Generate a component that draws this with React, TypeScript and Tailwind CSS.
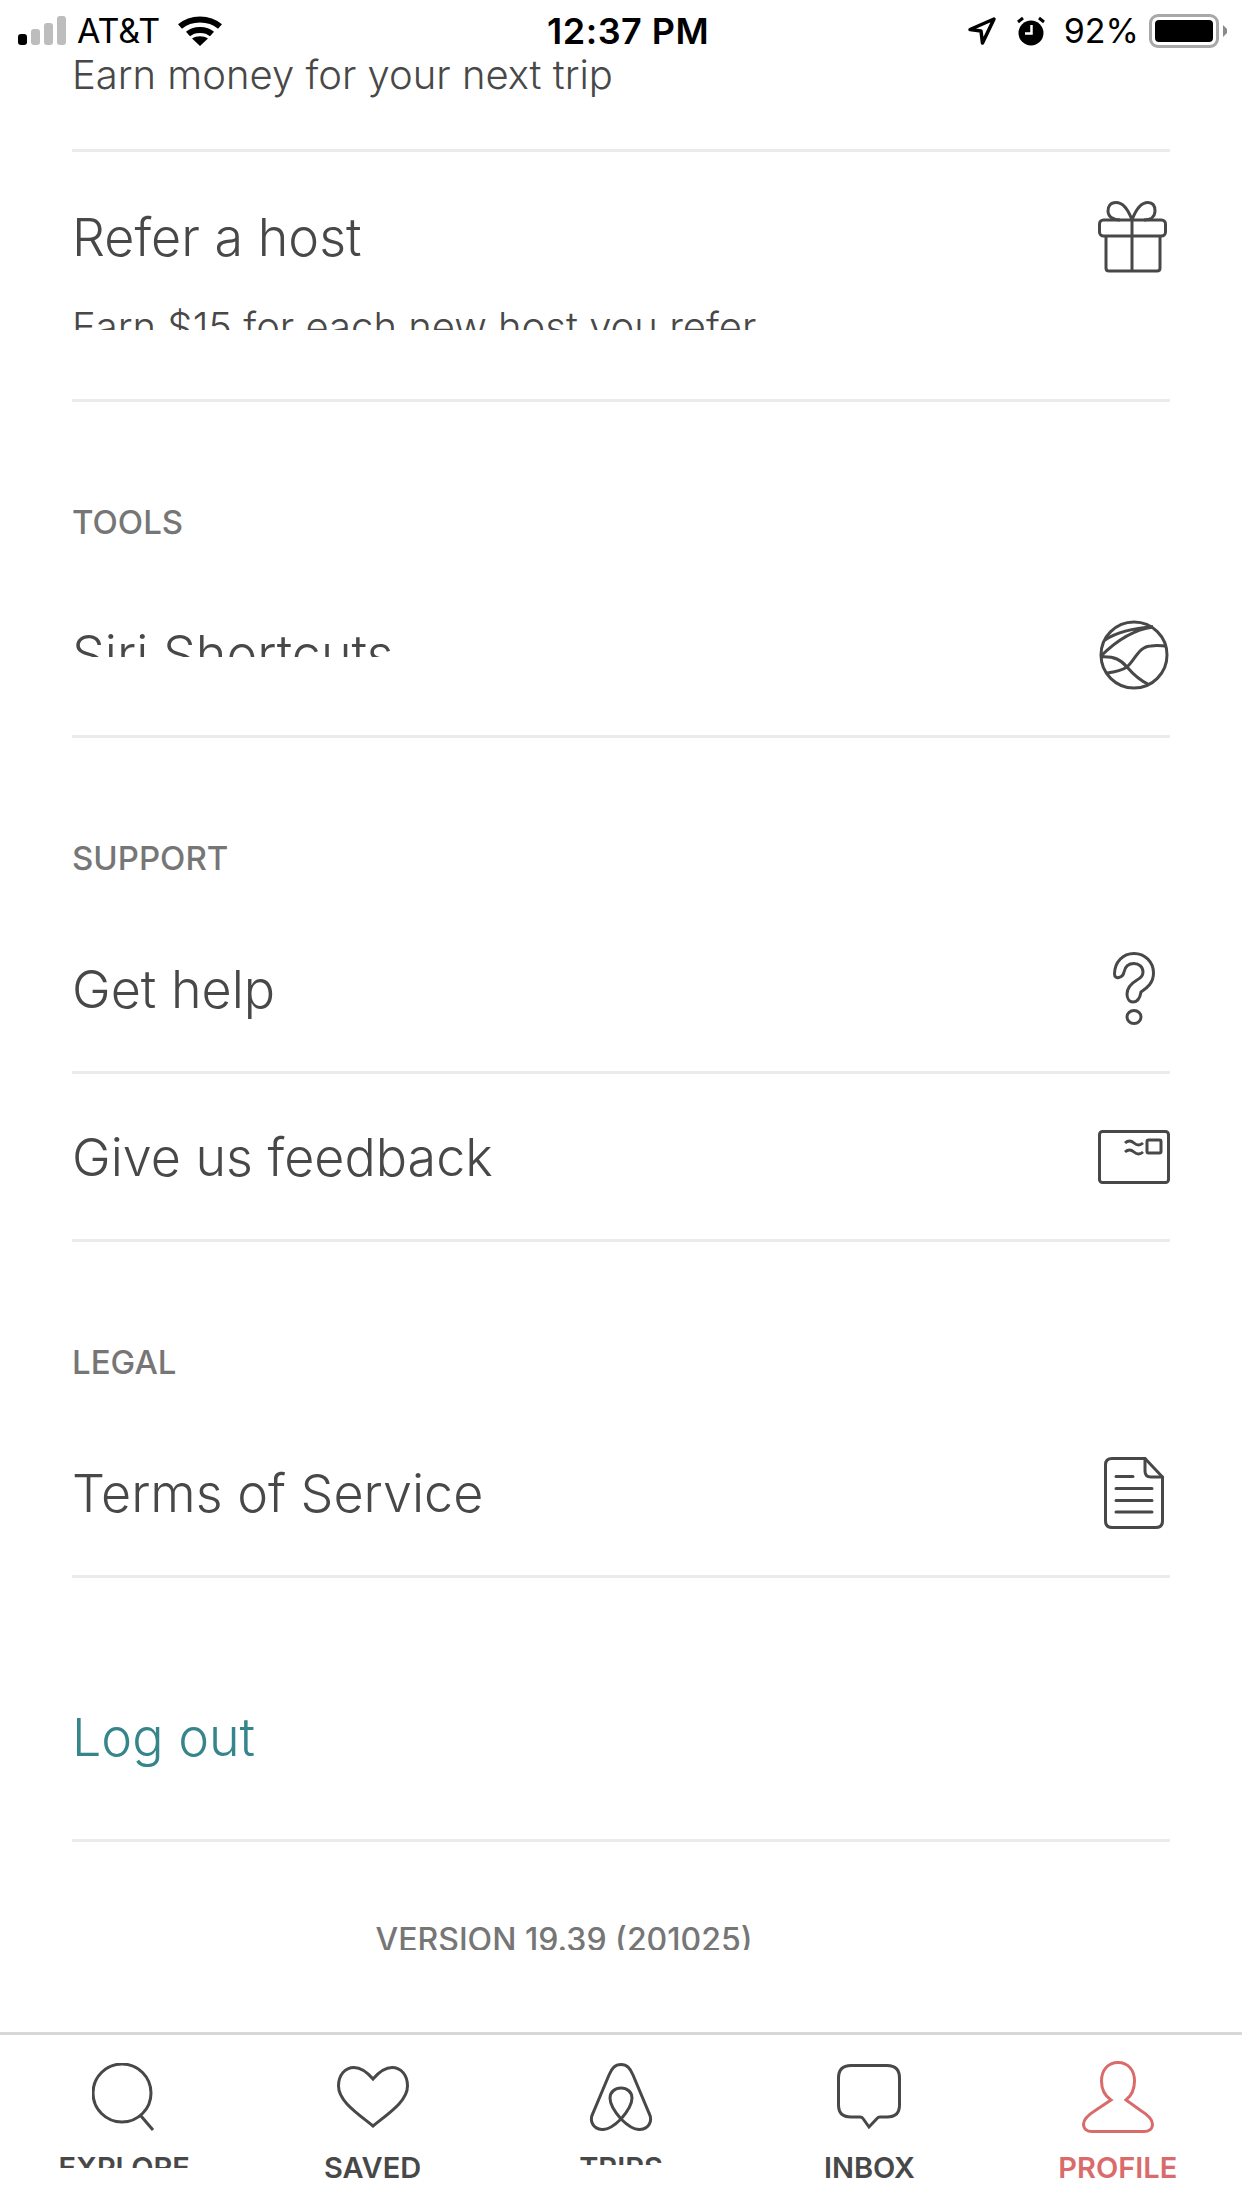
import React from "react";

const sans = "font-['Inter','Liberation_Sans',sans-serif]";

const SectionHeader = ({ label }: { label: string }) => (
  <div className="h-[168px] pl-[72px] pt-[86px] text-[33px] leading-[68px] font-medium text-[#767676]">{label}</div>
);

const Row = ({ title, icon, teal, tall }: { title: string; icon?: React.ReactNode; teal?: boolean; tall?: boolean }) => (
  <div className={`mx-[72px] ${tall ? "h-[208px]" : "h-[168px]"} border-b-[3px] border-[#ebebeb] flex items-center justify-between`}>
    <span className={`mt-[2px] text-[52px] font-light leading-[60px] ${teal ? "text-[#35858b]" : "text-[#484848]"}`}>{title}</span>
    {icon && <div className="w-[72px] flex justify-center">{icon}</div>}
  </div>
);

const GiftIcon = () => (
  <svg width="72" height="72" viewBox="0 0 72 72" fill="none" stroke="#484848" strokeWidth="3">
    <rect x="1.5" y="19" width="66" height="16" rx="4" />
    <path d="M8 35V67q0 3 3 3H59q3 0 3-3V35M34 19V70" />
    <path d="M34 19C30 8 24 1.5 18 1.5C12 1.5 10 6 10 10C10 16 16 19 22 19M34 19C38 8 44 1.5 50 1.5C56 1.5 57 6 57 10C57 16 52 19 46 19" />
  </svg>
);

const GlobeIcon = () => (
  <svg width="70" height="70" viewBox="0 0 70 70" fill="none" stroke="#484848" strokeWidth="3">
    <circle cx="35" cy="35" r="33" />
    <path d="M6 20C18 12 36 8 54 7M2 36C16 22 32 10 54 7M1 37C16 36 22 40 28 47C34 54 40 60 49 64M8 53C16 52 22 51 28 47C36 40 40 26 52 26C58 25 63 26 68 26" />
  </svg>
);

const HelpIcon = () => (
  <svg width="42" height="74" viewBox="0 0 42 74" fill="none" stroke="#484848" strokeWidth="3">
    <path d="M1.5 22C1.5 10 10 1.5 21 1.5C32 1.5 40.5 10 40.5 21C40.5 31 34 36 28 40C27 46 25 50 20 50C16 50 14 46 14 42C14 35 19 31 24 28C28 26 30 23 30 20C30 15 26 11.5 21 11.5C15 11.5 12 15 11 20C10 26 1.5 28 1.5 22Z" />
    <ellipse cx="21" cy="65" rx="7" ry="6.5" />
  </svg>
);

const FeedbackIcon = () => (
  <svg width="72" height="54" viewBox="0 0 72 54" fill="none" stroke="#484848" strokeWidth="3">
    <rect x="1.5" y="1.5" width="69" height="51" rx="3" />
    <rect x="49" y="10" width="14" height="13" rx="1.5" />
    <path d="M27 13q4.5-4 9 0t9 0M27 22q4.5-4 9 0t9 0" />
  </svg>
);

const DocIcon = () => (
  <svg width="60" height="72" viewBox="0 0 60 72" fill="none" stroke="#484848" strokeWidth="3" strokeLinecap="round">
    <path d="M41 1.5H8q-6.500 0-6.500 6.500V64q0 6.500 6.500 6.500H52q6.500 0 6.500-6.500V20Z" />
    <path d="M41 1.500V14q0 6 6 6H58.500M12 19.500H29M12 31.500H48M12 43.500H48M12 55H48" />
  </svg>
);

const Tab = ({ label, icon, clip, active }: { label: string; icon: React.ReactNode; clip?: string; active?: boolean }) => (
  <div className="flex flex-col items-center">
    <div className="h-[124px] w-full flex items-center justify-center">{icon}</div>
    <div className={`${clip ?? "h-[40px]"} -mt-[11px] overflow-hidden text-[29px] leading-[40px] font-semibold ${active ? "text-[#d96b6b]" : "text-[#484848]"}`}>{label}</div>
  </div>
);

export default function App() {
  return (
    <div className={`${sans} relative w-[1242px] h-[2208px] bg-white overflow-hidden flex flex-col`}>
      {/* status bar */}
      <div className="h-[58px] flex items-center text-black text-[34px] leading-[40px] pt-[3px]">
        <div className="w-[547px] pl-[18px] flex items-center">
          <div className="flex items-end gap-[4px] h-[29px]">
            <div className="w-[9px] h-[11px] rounded-[3px] bg-black" />
            <div className="w-[9px] h-[16px] rounded-[3px] bg-[#bdbdbd]" />
            <div className="w-[9px] h-[22px] rounded-[3px] bg-[#bdbdbd]" />
            <div className="w-[9px] h-[29px] rounded-[3px] bg-[#bdbdbd]" />
          </div>
          <span className="ml-[11px]">AT&amp;T</span>
          <svg className="ml-[18px]" width="44" height="30" viewBox="0 0 44 30" fill="none" stroke="#000" strokeWidth="6">
            <path d="M2 10.500C13 1 31 1 42 10.500M10 18C16 12.500 28 12.500 34 18" />
            <path d="M22 30L14 22.500C19 19.500 25 19.500 30 22.500Z" fill="#000" stroke="none" />
          </svg>
        </div>
        <span className="font-semibold text-[36px] tracking-[0.5px]">12:37 PM</span>
        <div className="flex-1 flex items-center justify-end pr-[15px]">
          <svg width="30" height="30" viewBox="0 0 30 30" fill="none" stroke="#000" strokeWidth="3.500">
            <path d="M27 3L3 13.500L14 15L15.500 27Z" strokeLinejoin="round" />
          </svg>
          <svg className="ml-[19px]" width="30" height="30" viewBox="0 0 30 30">
            <circle cx="15" cy="17" r="12.500" fill="#000" />
            <path d="M2 6L7 2M28 6L23 2" stroke="#000" strokeWidth="3" />
            <path d="M15.500 9V17.500H9" stroke="#fff" strokeWidth="2.500" fill="none" />
          </svg>
          <span className="ml-[18px]">92%</span>
          <div className="ml-[10px] w-[70px] h-[34px] rounded-[9px] border-[3px] border-[#a8a8a8] p-[3px]">
            <div className="w-full h-full rounded-[4px] bg-black" />
          </div>
          <svg className="ml-[4px]" width="4" height="12" viewBox="0 0 4 12">
            <path d="M0 0L4 4V8L0 12Z" fill="#8a8a8a" />
          </svg>
        </div>
      </div>

      {/* scrolled list */}
      <div className="mx-[72px] h-[94px] border-b-[3px] border-[#ebebeb]">
        <div className="text-[40px] leading-[40px] font-light text-[#484848] -mt-[3px]">Earn money for your next trip</div>
      </div>

      <div className="mx-[72px] h-[250px] border-b-[3px] border-[#ebebeb] flex justify-between">
        <div>
          <div className="mt-[56px] text-[52px] leading-[60px] font-light text-[#484848]">Refer a host</div>
          <div className="mt-[39px] h-[23px] overflow-hidden text-[40px] leading-[40px] font-light text-[#484848]">Earn $15 for each new host you refer</div>
        </div>
        <div className="w-[72px] pt-[49px]"><GiftIcon /></div>
      </div>

      <SectionHeader label="TOOLS" />
      <div className="mx-[72px] h-[168px] border-b-[3px] border-[#ebebeb] flex justify-between">
        <div className="mt-[55px] h-[32px] overflow-hidden text-[52px] leading-[60px] font-light text-[#484848]">Siri Shortcuts</div>
        <div className="w-[72px] pt-[50px] flex justify-center"><GlobeIcon /></div>
      </div>

      <SectionHeader label="SUPPORT" />
      <Row title="Get help" icon={<HelpIcon />} />
      <Row title="Give us feedback" icon={<FeedbackIcon />} />

      <SectionHeader label="LEGAL" />
      <Row title="Terms of Service" icon={<DocIcon />} />

      <div className="h-[56px]" />
      <Row title="Log out" teal tall />

      <div className="ml-[72px] w-[984px] mt-[78px] h-[30px] overflow-hidden text-center text-[32px] leading-[40px] font-medium text-[#767676]">VERSION 19.39 (201025)</div>

      {/* tab bar */}
      <div className="mt-auto h-[176px] border-t-[3px] border-[#d8d8d8] grid grid-cols-5">
        <Tab
          label="EXPLORE"
          clip="h-[20px]"
          icon={
            <svg width="64" height="68" viewBox="0 0 64 68" fill="none" stroke="#484848" strokeWidth="3">
              <ellipse cx="30" cy="30" rx="29" ry="29" />
              <path d="M49 53L61 67" />
            </svg>
          }
        />
        <Tab
          label="SAVED"
          icon={
            <svg width="72" height="62" viewBox="0 0 72 62" fill="none" stroke="#484848" strokeWidth="3">
              <path d="M36 13C30 6 24 1.500 17 1.500C8 1.500 1.500 9 1.500 20C1.500 35 20 47 36 60C52 47 70.500 35 70.500 20C70.500 9 64 1.500 55 1.500C48 1.500 42 6 36 13Z" />
            </svg>
          }
        />
        <Tab
          label="TRIPS"
          clip="h-[17px]"
          icon={
            <svg width="64" height="68" viewBox="0 0 64 68" fill="none" stroke="#484848" strokeWidth="3">
              <path d="M32 56C25 48 21 41 21 35C21 29 26 25 32 25C38 25 43 29 43 35C43 41 39 48 32 56C26 62 20 67 13 66.500C4 66 0 58 4 50L20 12C23 5 26 1.500 32 1.500C38 1.500 41 5 44 12L60 50C64 58 60 66 51 66.500C44 67 38 62 32 56Z" />
            </svg>
          }
        />
        <Tab
          label="INBOX"
          icon={
            <svg width="64" height="66" viewBox="0 0 64 66" fill="none" stroke="#484848" strokeWidth="3">
              <path d="M14 1.500H50Q62.500 1.500 62.500 14V41Q62.500 53 50 53H43Q41 53 40 54.500L32 63L26 54.500Q25 53 23 53H14Q1.500 53 1.500 41V14Q1.500 1.500 14 1.500Z" />
            </svg>
          }
        />
        <Tab
          label="PROFILE"
          active
          icon={
            <svg width="72" height="72" viewBox="0 0 72 72" fill="none" stroke="#d96b6b" strokeWidth="3">
              <path d="M36 1.500C26 1.500 19.500 9 19.500 20C19.500 28 23 35 29 39L14 49C6 54 1.500 59 1.500 63C1.500 68 5 70.500 10 70.500H62C67 70.500 70.500 68 70.500 63C70.500 59 66 54 58 49L44 39C49 35 52.500 28 52.500 20C52.500 9 46 1.500 36 1.500Z" />
            </svg>
          }
        />
      </div>
    </div>
  );
}
